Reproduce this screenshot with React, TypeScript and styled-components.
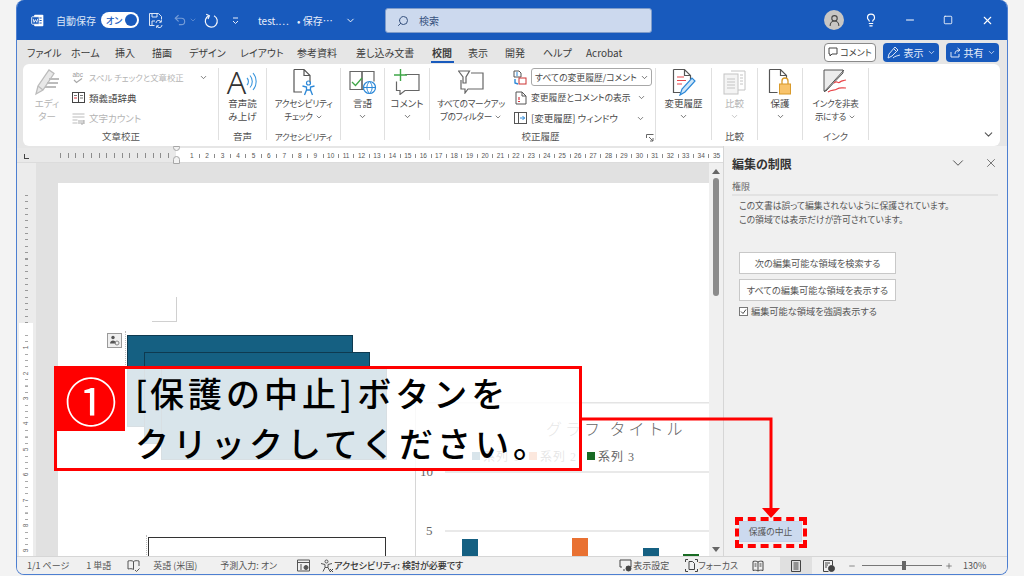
import styled, { createGlobalStyle } from "styled-components";
import { ChevronDown, Minus, Square, X, Search, Lightbulb, UserRound, Undo2, Plus } from "lucide-react";

const GlobalStyle = createGlobalStyle`
  html, body {
    margin: 0;
    padding: 0;
    width: 1024px;
    height: 576px;
    overflow: hidden;
    background: #f3f3f3;
    font-family: "Noto Sans CJK JP", "Noto Sans", sans-serif;
    font-feature-settings: "palt";
    color: #444;
  }
  * { box-sizing: border-box; }
`;

const Stage = styled.div`
  position: relative;
  width: 1024px;
  height: 576px;
  padding-left: 16px;
`;

const Window = styled.div`
  width: 992px;
  height: 575px;
  display: flex;
  flex-direction: column;
  border: 1px solid #4d7fd1;
  border-top: 0;
  border-radius: 8px;
  overflow: hidden;
  background: #e6e6e6;
`;

/* title bar */
const TitleBar = styled.div`
  height: 40px;
  flex: none;
  background: #185abd;
  color: #fff;
  display: flex;
  align-items: center;
  padding-left: 13px;
  font-size: 10px;
`;

const AutoSave = styled.span`
  margin-left: 11px;
  width: 45px;
  color: #dce6f6;
`;

const Toggle = styled.div`
  width: 38px;
  height: 16px;
  border-radius: 8px;
  background: #fff;
  color: #185abd;
  font-size: 9px;
  font-weight: 500;
  display: flex;
  align-items: center;
  justify-content: space-between;
  padding: 0 2px 0 5px;
  &::after {
    content: "";
    width: 12px;
    height: 12px;
    border-radius: 50%;
    background: #185abd;
  }
`;

const TitleIcon = styled.span<{ $left?: number; $dim?: boolean }>`
  display: flex;
  margin-left: ${({ $left }) => $left ?? 0}px;
  opacity: ${({ $dim }) => ($dim ? 0.4 : 1)};
`;

const TitleText = styled.span<{ $left: number; $width: number }>`
  margin-left: ${({ $left }) => $left}px;
  width: ${({ $width }) => $width}px;
  font-size: 10px;
  white-space: nowrap;
  color: #e8eefa;
`;

const SearchBox = styled.div`
  position: absolute;
  left: 385px;
  top: 8px;
  width: 267px;
  height: 25px;
  background: #ccd9ee;
  border: 1px solid #7f9cc9;
  border-radius: 3px;
  color: #37527e;
  font-size: 10px;
  display: flex;
  align-items: center;
  gap: 10px;
  padding-left: 11px;
  svg {
    transform: scaleX(-1);
  }
`;

const TitleRight = styled.div`
  margin-left: auto;
  display: flex;
  align-items: center;
  height: 100%;
`;

const Avatar = styled.div`
  width: 20px;
  height: 20px;
  border-radius: 50%;
  background: #c8c6c4;
  color: #444;
  display: flex;
  align-items: center;
  justify-content: center;
`;

const WinButton = styled.span<{ $left: number }>`
  display: flex;
  margin-left: ${({ $left }) => $left}px;
  color: #fff;
`;

/* tabs */
const TabRow = styled.div`
  height: 24px;
  flex: none;
  display: flex;
  align-items: center;
  padding-left: 10px;
  font-size: 10px;
  color: #3c3c3c;
`;

const Tab = styled.span<{ $active?: boolean; $width: number }>`
  position: relative;
  width: ${({ $width }) => $width}px;
  flex: none;
  white-space: nowrap;
  font-weight: ${({ $active }) => ($active ? 700 : 400)};
  &::after {
    content: "";
    display: ${({ $active }) => ($active ? "block" : "none")};
    position: absolute;
    left: -1px;
    top: 16px;
    width: 23px;
    height: 2px;
    background: #185abd;
  }
`;

const TabActions = styled.div`
  margin-left: auto;
  margin-right: 8px;
  display: flex;
  gap: 7px;
`;

const CommentButton = styled.div`
  width: 52px;
  height: 19px;
  background: #fff;
  border: 1px solid #8a8a8a;
  border-radius: 4px;
  font-size: 9px;
  display: flex;
  align-items: center;
  justify-content: center;
  gap: 2px;
`;

const BlueButton = styled.div<{ $width: number }>`
  width: ${({ $width }) => $width}px;
  height: 19px;
  background: #185abd;
  color: #e8eefa;
  border-radius: 4px;
  font-size: 10px;
  display: flex;
  align-items: center;
  justify-content: center;
  gap: 3px;
`;

/* ribbon */
const Ribbon = styled.div`
  flex: none;
  height: 82px;
  margin: 0 7px 0 6px;
  padding: 4px 0 6px 1px;
  background: #fff;
  border-radius: 6px;
  display: flex;
  position: relative;
`;

const Group = styled.div<{ $width: number }>`
  width: ${({ $width }) => $width}px;
  flex: none;
  height: 72px;
  display: flex;
  flex-direction: column;
  border-right: 1px solid #e0e0e0;
  position: relative;
`;

const GroupBody = styled.div`
  flex: 1;
  display: flex;
  min-height: 0;
`;

const GroupLabel = styled.div<{ $offset?: number; $tight?: boolean }>`
  height: 14px;
  margin-bottom: -3px;
  text-align: center;
  font-size: ${({ $tight }) => ($tight ? 8.5 : 9.5)}px;
  letter-spacing: ${({ $tight }) => ($tight ? -0.3 : 0)}px;
  line-height: 14px;
  color: #555;
  padding-right: ${({ $offset }) => $offset ?? 0}px;
`;

const LargeButton = styled.div<{ $width?: number; $dim?: boolean; $tight?: boolean }>`
  width: ${({ $width }) => ($width ? `${$width}px` : "100%")};
  flex: none;
  display: flex;
  flex-direction: column;
  align-items: center;
  text-align: center;
  font-size: ${({ $tight }) => ($tight ? 8.6 : 9.5)}px;
  letter-spacing: ${({ $tight }) => ($tight ? -0.3 : 0)}px;
  line-height: 13px;
  color: ${({ $dim }) => ($dim ? "#b4b4b4" : "#4a4a4a")};
  white-space: nowrap;
  > svg {
    margin-top: 2px;
  }
`;

const InlineChevron = styled(ChevronDown)`
  margin-left: 2px;
  vertical-align: -1px;
`;

const IconSlot = styled.div`
  height: 28px;
  margin-bottom: 1px;
  display: flex;
  align-items: center;
  justify-content: center;
  position: relative;
`;

const BigLetter = styled.span`
  font-family: "Noto Sans", sans-serif;
  font-size: 32px;
  line-height: 28px;
  font-weight: 300;
  color: #333;
`;

const ListColumn = styled.div<{ $left: number }>`
  margin-left: ${({ $left }) => $left}px;
  flex: 1;
  display: flex;
  flex-direction: column;
  gap: 2px;
`;

const ListRow = styled.div<{ $dim?: boolean; $size?: number }>`
  height: 18.5px;
  display: flex;
  align-items: center;
  gap: 4px;
  font-size: ${({ $size }) => $size ?? 9.5}px;
  white-space: nowrap;
  color: ${({ $dim }) => ($dim ? "#b4b4b4" : "#4a4a4a")};
`;

const Tiny = styled.span<{ $left: number }>`
  display: flex;
  margin-left: ${({ $left }) => $left}px;
  color: #555;
`;

const SelectBox = styled.div`
  width: 121px;
  height: 18px;
  border: 1px solid #a8a8a8;
  border-radius: 3px;
  display: flex;
  align-items: center;
  justify-content: space-between;
  padding: 0 2px 0 3px;
  font-size: 8.8px;
`;

const RibbonCollapse = styled.span`
  position: absolute;
  right: 5px;
  bottom: 5px;
  display: flex;
  color: #555;
`;

const Launcher = styled.span`
  position: absolute;
  right: 1px;
  bottom: -2px;
  display: flex;
`;

/* workspace */
const Workspace = styled.div`
  flex: 1;
  min-height: 0;
  display: flex;
`;

const DocColumn = styled.div`
  width: 706px;
  flex: none;
  display: flex;
  flex-direction: column;
  background: #e6e6e6;
  padding-top: 2px;
`;

const HRuler = styled.div`
  height: 15px;
  flex: none;
  display: flex;
  padding-left: 159px;
  border-bottom: 1px solid #dcdcdc;
  background: #e9e9e9 repeating-linear-gradient(90deg, #8c8c8c 0 1px, transparent 1px 7.72px) 43px 5px / 116px 5px no-repeat;
  position: relative;
`;

const RulerTicks = styled.div`
  flex: 1;
  background: #fff;
  display: flex;
  align-items: center;
  padding-left: 8px;
  overflow: hidden;
  font-family: "Liberation Sans", sans-serif;
  font-size: 6.5px;
  color: #555;
`;

const RulerCell = styled.span`
  width: 15.45px;
  flex: none;
  text-align: center;
  position: relative;
  &::after {
    content: "";
    position: absolute;
    left: 15px;
    top: 2px;
    width: 1px;
    height: 4px;
    background: #8c8c8c;
  }
`;

const TabStop = styled.span`
  position: absolute;
  left: 7px;
  top: 6px;
  width: 5px;
  height: 5px;
  border-left: 1.5px solid #444;
  border-bottom: 1.5px solid #444;
`;

const IndentMark = styled.span`
  position: absolute;
  left: 156px;
  width: 7px;
  background: #f2f2f2;
  border: 1px solid #a6a6a6;
`;

const IndentTop = styled(IndentMark)`
  top: -2px;
  height: 5px;
  border-radius: 0 0 4px 4px;
`;

const IndentBottom = styled(IndentMark)`
  top: 8px;
  height: 8px;
  border-radius: 4px 4px 0 0;
`;

const DocRow = styled.div`
  flex: 1;
  min-height: 0;
  display: flex;
`;

const VRuler = styled.div`
  width: 19px;
  flex: none;
  padding: 32px 3px 0 2px;
  background: #ececec;
  display: flex;
  flex-direction: column;
`;

const VRulerGrey = styled.div`
  height: 128px;
  flex: none;
  background: repeating-linear-gradient(180deg, #999 0 1px, transparent 1px 6.35px) center / 3px 100% no-repeat;
`;

const VRulerWhite = styled.div`
  flex: 1;
  background: #fff;
  padding-top: 12px;
  font-family: "Liberation Sans", sans-serif;
  font-size: 6.5px;
  color: #666;
`;

const VRulerCell = styled.div`
  height: 25.4px;
  display: flex;
  align-items: center;
  justify-content: center;
  background: repeating-linear-gradient(180deg, #aaa 0 1px, transparent 1px 6.35px) center / 3px 100% no-repeat;
  span {
    transform: rotate(-90deg);
    background: #fff;
    line-height: 7px;
  }
`;

const DocScroller = styled.div`
  flex: 1;
  min-width: 0;
  background: #e1e1e1;
  padding: 20px 0 0 22px;
  display: flex;
  overflow: hidden;
`;

const Page = styled.div`
  flex: 1;
  height: 400px;
  background: #fff;
  position: relative;
`;

const MarginCorner = styled.div`
  position: absolute;
  left: 94px;
  top: 114px;
  width: 25px;
  height: 25px;
  border-right: 1px solid #d0d0d0;
  border-bottom: 1px solid #d0d0d0;
`;

const AnchorBadge = styled.div`
  position: absolute;
  left: 49px;
  top: 150px;
  width: 15px;
  height: 15px;
  background: #efefef;
  border: 1px solid #9a9a9a;
  display: flex;
  align-items: center;
  justify-content: center;
`;

const DottedGuide = styled.div<{ $x: number; $y: number; $h: number }>`
  position: absolute;
  left: ${({ $x }) => $x}px;
  top: ${({ $y }) => $y}px;
  height: ${({ $h }) => $h}px;
  border-left: 1px dotted #bdbdbd;
`;

const BlueShape = styled.div<{ $x: number; $y: number }>`
  position: absolute;
  left: ${({ $x }) => $x}px;
  top: ${({ $y }) => $y}px;
  width: 226px;
  height: 92px;
  background: #156082;
  border: 1px solid #0e3a50;
`;

const OutlineShape = styled.div`
  position: absolute;
  left: 90px;
  top: 354px;
  width: 238px;
  height: 40px;
  background: #fff;
  border: 1px solid #333;
`;

const ChartArea = styled.svg`
  position: absolute;
  left: 356px;
  top: 219px;
`;

const ChartTitle = styled.text`
  font-family: "Noto Sans CJK JP", sans-serif;
  font-size: 16px;
  font-weight: 300;
  letter-spacing: 3px;
  font-feature-settings: normal;
  fill: #666;
`;

const ScrollTrack = styled.div`
  width: 14px;
  flex: none;
  background: #f0f0f0;
  display: flex;
  flex-direction: column;
  align-items: center;
  padding-top: 6px;
`;

const ScrollArrow = styled.span<{ $down?: boolean }>`
  width: 0;
  height: 0;
  border-left: 4px solid transparent;
  border-right: 4px solid transparent;
  ${({ $down }) => ($down ? "border-top: 5px solid #666; margin-top: auto; margin-bottom: 4px;" : "border-bottom: 5px solid #666;")}
`;

const ScrollThumb = styled.div`
  width: 6px;
  height: 118px;
  margin-top: 4px;
  border-radius: 3px;
  background: #8b8b8b;
`;

/* task pane */
const Pane = styled.div`
  flex: 1;
  min-width: 0;
  background: #f0f0f0;
  border-left: 1px solid #d6d6d6;
  display: flex;
  flex-direction: column;
  padding: 8px 9px 14px 8px;
  font-size: 8.8px;
  color: #555;
`;

const PaneHeader = styled.div`
  display: flex;
  align-items: center;
  height: 18px;
  color: #444;
  svg + svg {
    margin-left: 17px;
  }
`;

const PaneTitle = styled.h2`
  margin: 0 auto 0 0;
  font-size: 12px;
  font-weight: 700;
  color: #333;
`;

const PaneSection = styled.div`
  margin-top: 8px;
  padding-bottom: 1px;
  border-bottom: 2px solid #e2e2e2;
  font-size: 9px;
  line-height: 13px;
  color: #666;
`;

const PaneBody = styled.div`
  flex: 1;
  display: flex;
  flex-direction: column;
  padding-left: 7px;
`;

const PaneText = styled.p`
  margin: 3px 0 0;
  line-height: 14px;
`;

const PaneButton = styled.div<{ $top: number }>`
  width: 157px;
  height: 22px;
  margin-top: ${({ $top }) => $top}px;
  background: #fff;
  border: 1px solid #c8c8c8;
  display: flex;
  align-items: center;
  justify-content: center;
  font-size: 9.2px;
`;

const CheckRow = styled.label`
  display: flex;
  align-items: center;
  gap: 3px;
  margin-top: 3px;
  font-size: 9.2px;
`;

const CheckBox = styled.span`
  width: 9px;
  height: 9px;
  background: #fff;
  border: 1px solid #777;
  display: flex;
  align-items: center;
  justify-content: center;
`;

const StopButton = styled.div`
  width: 63px;
  height: 21px;
  margin-top: auto;
  background: #ccdaef;
  border: 1px solid #c5d3e8;
  display: flex;
  align-items: center;
  justify-content: center;
  font-size: 8.8px;
  color: #555;
`;

/* status bar */
const StatusBar = styled.div`
  height: 18px;
  flex: none;
  background: #f0f0f0;
  border-top: 1px solid #d6d6d6;
  display: flex;
  align-items: center;
  font-size: 9px;
  color: #555;
  position: relative;
`;

const StatusItem = styled.span<{ $left: number; $strong?: boolean }>`
  display: flex;
  align-items: center;
  margin-left: ${({ $left }) => $left}px;
  white-space: nowrap;
  font-weight: ${({ $strong }) => ($strong ? 500 : 400)};
  color: ${({ $strong }) => ($strong ? "#333" : "#555")};
`;

const ViewButton = styled.span<{ $active?: boolean; $left: number }>`
  width: 32px;
  height: 17px;
  margin-left: ${({ $left }) => $left}px;
  display: flex;
  align-items: center;
  justify-content: center;
  background: ${({ $active }) => ($active ? "#e0e0e0" : "transparent")};
`;

const ZoomTrack = styled.span`
  width: 80px;
  height: 1px;
  margin-left: 6px;
  background: #777;
  position: relative;
  &::after {
    content: "";
    position: absolute;
    left: 40px;
    top: -4px;
    width: 4px;
    height: 9px;
    background: #666;
  }
`;

/* instruction overlay */
const Callout = styled.div`
  position: absolute;
  left: 54px;
  top: 366px;
  width: 528px;
  height: 105px;
  border: 3px solid #f00;
  background: rgba(255, 255, 255, 0.84);
  display: flex;
  align-items: flex-start;
`;

const StepBadge = styled.div`
  width: 68px;
  height: 63px;
  flex: none;
  background: #f00;
  color: #fff;
  font-size: 52px;
  line-height: 63px;
  text-align: center;
  font-weight: 400;
  margin-top: -1px;
`;

const CalloutText = styled.div`
  margin: -1px 0 0 10px;
  font-size: 34px;
  line-height: 50px;
  font-weight: 500;
  letter-spacing: 4px;
  font-feature-settings: normal;
  color: #000;
  white-space: nowrap;
`;

const Bracket = styled.span<{ $after: number }>`
  letter-spacing: 0;
  font-feature-settings: "palt";
  margin-right: ${({ $after }) => $after}px;
`;

const Connector = styled.svg`
  position: absolute;
  left: 581px;
  top: 416px;
`;

const DashedFrame = styled.div`
  position: absolute;
  left: 735px;
  top: 517px;
  width: 72px;
  height: 31px;
  border: 4px dashed #f00;
`;

const tabs: [string, number][] = [
  ["ファイル", 44], ["ホーム", 44], ["挿入", 37], ["描画", 37], ["デザイン", 51],
  ["レイアウト", 57], ["参考資料", 59], ["差し込み文書", 76], ["校閲", 36], ["表示", 37],
  ["開発", 38], ["ヘルプ", 43], ["Acrobat", 50],
];

const rulerNumbers = Array.from({ length: 35 }, (_, i) => i + 1);
const vRulerNumbers = [1, 2, 3, 4, 5, 6, 7, 8, 9];

const WordLogo = () => (
  <svg width="15" height="15" viewBox="0 0 18 18">
    <rect x="5" y="2" width="11" height="14" rx="1" fill="#fff" />
    <path d="M8 6h6M8 9h6M8 12h6" stroke="#185abd" strokeWidth="1.2" />
    <rect x="2" y="4.5" width="9" height="9" rx="1" fill="#185abd" stroke="#fff" />
    <path d="M3.800 7l1 4.200L6.500 8l1.700 3.200L9.200 7" fill="none" stroke="#fff" strokeWidth="1" />
  </svg>
);

const SaveIcon = () => (
  <svg width="15" height="16" viewBox="0 0 15 16" fill="none" stroke="#dce6f6" strokeWidth="1">
    <path d="M1.500 1.500h9l3 3v3M1.500 1.500v12h5" />
    <path d="M4 1.500v3.500h5V1.500M4 13V9h3" />
    <path d="M8 11a2.600 2.600 0 0 1 5-1M14 13a2.600 2.600 0 0 1-5 1" />
    <path d="M13.300 8v2.200h-2.200M8.700 16v-2.200h2.200" />
  </svg>
);

const RedoIcon = () => (
  <svg width="15" height="15" viewBox="0 0 15 15" fill="none" stroke="#f2f5fb" strokeWidth="1.200">
    <path d="M5 2.600a6 6 0 1 0 5 .2" />
    <path d="M2.200 1.200L5.400 2.800 4 6" />
  </svg>
);

const QatMore = () => (
  <svg width="9" height="9" viewBox="0 0 9 9" fill="none" stroke="#e8eefa">
    <path d="M2 2h5M2 5l2.500 2.500L7 5" />
  </svg>
);

const EditorIcon = () => (
  <svg width="27" height="28" viewBox="0 0 27 28" fill="none" stroke="#bcbcbc" strokeWidth="1.3">
    <path d="M2 26l2-8L15 2l5 3.500L9 22z" fill="#e8e8e8" />
    <path d="M4 18l5 4" />
    <path d="M15 11h10M13 15h11M11 19h11" strokeWidth="2" />
  </svg>
);

const SpellIcon = () => (
  <svg width="13" height="13" viewBox="0 0 13 13" fill="none" stroke="#a9a9a9">
    <text x="0.500" y="6" fontSize="6.500" fill="#9a9a9a" stroke="none" fontFamily="Liberation Sans">abc</text>
    <path d="M2 9l2.500 2.500L10 7.500" strokeWidth="1.200" />
  </svg>
);

const BookIcon = () => (
  <svg width="13" height="13" viewBox="0 0 13 13" fill="none" stroke="#444">
    <rect x="0.500" y="1.500" width="12" height="10" fill="#fff" />
    <path d="M6.500 1.500v10" />
    <path d="M2 4.500h3M8 4.500h3M8 7h3" stroke="#777" />
    <path d="M2 7h3" stroke="#d9363e" />
  </svg>
);

const CountIcon = () => (
  <svg width="13" height="13" viewBox="0 0 13 13" fill="none" stroke="#bbb">
    <path d="M0.500 2h12M0.500 5h12M0.500 8h5M0.500 11h5" />
    <path d="M7 8v4M9 8v4h2V8M12 8v4" stroke="#aaa" />
  </svg>
);

const ReadWaves = () => (
  <svg width="12" height="20" viewBox="0 0 12 20" fill="none" stroke="#3a96dd" strokeWidth="1.100">
    <path d="M1 6a5 5 0 0 1 0 7M4 3.500a9 9 0 0 1 0 12M7 1a13 13 0 0 1 0 17" />
  </svg>
);

const AccessibilityIcon = () => (
  <svg width="26" height="28" viewBox="0 0 26 28" fill="none" stroke="#555">
    <path d="M3 1.500h10l6 6v7M3 1.500v22.500h8M13 1.500v6h6" strokeWidth="1.200" />
    <circle cx="17.500" cy="15" r="2" stroke="#2b88d8" strokeWidth="1.200" />
    <path d="M11.500 18l4 1v3l-2 5M23.500 18l-4 1v3l2 5M15.500 22h4" stroke="#2b88d8" strokeWidth="1.300" />
  </svg>
);

const LanguageIcon = () => (
  <svg width="28" height="26" viewBox="0 0 28 26" fill="none" stroke="#666">
    <path d="M1 2.500h12v18H1zM13 2.500h12v10M13 20.500h4" strokeWidth="1.200" />
    <path d="M13 2.500v18" strokeWidth="1.200" />
    <path d="M3 13l3.500 3.500L13 9" stroke="#3fa648" strokeWidth="1.300" />
    <circle cx="20.500" cy="18.500" r="6" fill="#fff" stroke="#2b88d8" strokeWidth="1.200" />
    <path d="M14.500 18.500h12M20.500 12.500c-3.500 3.500-3.500 8.500 0 12M20.500 12.500c3.500 3.500 3.500 8.500 0 12" stroke="#2b88d8" />
  </svg>
);

const CommentIcon = () => (
  <svg width="26" height="26" viewBox="0 0 26 26" fill="none" stroke="#666" strokeWidth="1.200">
    <path d="M11 5.500h14v16H11l-5 4v-4H2.500v-9" />
    <path d="M6.500 0v12M0 6h13" stroke="#3fa648" strokeWidth="1.400" />
  </svg>
);

const FilterCommentIcon = () => (
  <svg width="26" height="24" viewBox="0 0 26 24" fill="none" stroke="#666" strokeWidth="1.200">
    <path d="M13 3h12v16H10l-3 4v-4H3v-9" />
    <path d="M0.500 1h11L8 7v6H5V7z" fill="#fff" />
  </svg>
);

const ChangesGlyph = () => (
  <svg width="14" height="15" viewBox="0 0 14 15" fill="none">
    <path d="M1 1h5l2 2v4H1z" stroke="#555" />
    <rect x="6" y="8" width="7" height="6" fill="#fff" stroke="#c33" />
    <path d="M2 9v4l3 1" stroke="#2b88d8" strokeWidth="1.400" />
    <path d="M3 3h2M3 5h2" stroke="#2b88d8" />
  </svg>
);

const MarkupDocGlyph = () => (
  <svg width="12" height="14" viewBox="0 0 12 14" fill="none" stroke="#555">
    <path d="M1 1h6l4 4v8H1zM7 1v4h4" />
    <path d="M4 6v3" stroke="#d9363e" strokeWidth="1.200" />
    <path d="M3 10.500h2" stroke="#d9363e" />
  </svg>
);

const PaneGlyph = () => (
  <svg width="13" height="12" viewBox="0 0 13 12" fill="none" stroke="#555">
    <rect x="0.500" y="0.500" width="12" height="11" />
    <path d="M4.500 0.500v11" />
    <path d="M6 6h5M8.500 4l2 2-2 2" stroke="#2b88d8" />
  </svg>
);

const TrackIcon = () => (
  <svg width="24" height="28" viewBox="0 0 24 28" fill="none">
    <path d="M1.500 1.500h11l6 6v4M1.500 1.500v23h7M12.500 1.500v6h6" stroke="#555" strokeWidth="1.200" />
    <path d="M5 9h7M5 12.500h9M5 16h5" stroke="#e8464a" strokeWidth="1.200" />
    <path d="M8 27l2-6L20 10l3 3-10 11z" fill="#cfe6f8" stroke="#2b88d8" strokeWidth="1.200" />
  </svg>
);

const CompareIcon = () => (
  <svg width="24" height="25" viewBox="0 0 24 25" fill="none" stroke="#c4c4c4">
    <path d="M8 1h14v19H14" />
    <rect x="1" y="4" width="14" height="20" fill="#f4f4f4" />
    <path d="M4 9h8M4 12h8M4 15h8M4 18h8M17 5h3M17 8h3M17 11h3M17 14h3" />
  </svg>
);

const ProtectIcon = () => (
  <svg width="24" height="28" viewBox="0 0 24 28" fill="none">
    <path d="M1.500 1.500h11l6 6v3M1.500 1.500v23h8M12.500 1.500v6h6" stroke="#555" strokeWidth="1.200" />
    <rect x="11.500" y="16" width="11" height="10" fill="#f8c36b" stroke="#d99a2b" />
    <path d="M14 16v-3a3 3 0 0 1 6 0v3" stroke="#d99a2b" strokeWidth="1.300" />
  </svg>
);

const InkIcon = () => (
  <svg width="26" height="26" viewBox="0 0 26 26" fill="none">
    <path d="M1 1h19v3L3 22H1z" fill="#ececec" stroke="#555" />
    <path d="M1 23L21 1" stroke="#555" />
    <path d="M11 14c3-3 4 1 6-1s3-1 6-2M5 23c4-3 6-1 9-3s5-1 9-1" stroke="#e8464a" strokeWidth="1.200" />
  </svg>
);

const LauncherIcon = () => (
  <svg width="8" height="8" viewBox="0 0 8 8" fill="none" stroke="#666">
    <path d="M0.500 4V0.500H7.500M3 3l4 4M7 4v3H4" />
  </svg>
);

const PenIcon = () => (
  <svg width="14" height="14" viewBox="0 0 14 14" fill="none" stroke="#dce6f6">
    <path d="M1 13l1-4 6-7 3 3-6 6z" />
    <path d="M6 13c2-2 4-2 7-3M7 4l3 3" />
  </svg>
);

const ShareIcon = () => (
  <svg width="11" height="11" viewBox="0 0 11 11" fill="none" stroke="#dce6f6">
    <path d="M1 5v5h8V7M5 7c0-3 2-4 5-4M7.500 1L10 3 7.500 5" />
  </svg>
);

const CommentMini = () => (
  <svg width="10" height="10" viewBox="0 0 10 10" fill="none" stroke="#444">
    <path d="M1 1h8v6H4L2 9V7H1z" />
  </svg>
);

const AnchorGlyph = () => (
  <svg width="11" height="11" viewBox="0 0 11 11">
    <circle cx="4" cy="2.500" r="1.700" fill="#555" />
    <path d="M1 8.500c0-4 6-4 6 0z" fill="#555" />
    <circle cx="8" cy="8" r="2" fill="none" stroke="#888" />
  </svg>
);

const BookStatus = () => (
  <svg width="13" height="13" viewBox="0 0 13 13" fill="none" stroke="#555">
    <path d="M6.500 2.500C5 1.500 3 1.500 1 2v8c2-.5 4-.5 5.500.5V2.500zM6.500 2.500C8 1.500 10 1.500 12 2v5M8 11l1.500 1.500 3-3" />
  </svg>
);

const MacroStatus = () => (
  <svg width="13" height="13" viewBox="0 0 13 13" fill="none" stroke="#555">
    <path d="M0.500 1h12v11H0.500zM0.500 3.500h12M3 6h2M3 8h2M3 10h2" />
    <circle cx="9" cy="8.500" r="2" fill="#555" />
  </svg>
);

const PersonStatus = () => (
  <svg width="14" height="14" viewBox="0 0 14 14" fill="none" stroke="#555">
    <circle cx="6.500" cy="2.500" r="1.500" />
    <path d="M1 4.500l4 1v3l-2 4M12 4.500l-4 1v3l2 4M5 8.500h3" />
    <path d="M10 10l3 3M13 10l-3 3" stroke="#444" />
  </svg>
);

const DisplayStatus = () => (
  <svg width="14" height="13" viewBox="0 0 14 13" fill="none" stroke="#444">
    <path d="M1 1h11v7H7M1 1v7h2M4 11h2" />
    <circle cx="9.500" cy="9.500" r="2.500" fill="#444" />
  </svg>
);

const FocusStatus = () => (
  <svg width="13" height="13" viewBox="0 0 13 13" fill="none" stroke="#444">
    <path d="M0.500 3V0.500H3M10 0.500h2.500V3M0.500 10v2.500H3M10 12.500h2.500V10" />
    <path d="M4 2.500h3.500l2 2v6H4z" />
  </svg>
);

const ReadView = () => (
  <svg width="12" height="12" viewBox="0 0 12 12" fill="none" stroke="#444">
    <path d="M6 2C4.500 1 2.500 1 1 1.500v9c1.500-.5 3.500-.5 5 .5 1.500-1 3.500-1 5-.5v-9C9.500 1 7.500 1 6 2zM6 2v9M2.500 4h2M2.500 6h2M7.500 4h2M7.500 6h2" />
  </svg>
);

const PrintView = () => (
  <svg width="10" height="12" viewBox="0 0 10 12" fill="none" stroke="#444">
    <path d="M0.500 0.500h9v11h-9zM2.500 3h5M2.500 5h5M2.500 7h5M2.500 9h5" />
  </svg>
);

const WebView = () => (
  <svg width="12" height="12" viewBox="0 0 12 12" fill="none" stroke="#444">
    <path d="M0.500 0.500h9v5M0.500 0.500v11h5M2 3h5M2 5h3M2 7h2" />
    <circle cx="8.500" cy="8.500" r="3" fill="#444" />
  </svg>
);

const Chart = () => (
  <ChartArea width="295" height="154" viewBox="0 0 295 154">
    <path d="M1.500 0v154" stroke="#d6d6d6" strokeWidth="1" />
    <path d="M2 0.500h293" stroke="#e4e4e4" strokeWidth="2" />
    <path d="M31 70h264M31 129h264" stroke="#e2e2e2" strokeWidth="1.500" />
    <ChartTitle x="132" y="33">グラフ タイトル</ChartTitle>
    <rect x="58" y="50" width="8" height="8" fill="#156082" />
    <text x="69" y="59" fontSize="12" letterSpacing="1" fill="#666" fontFamily="Liberation Serif, Noto Sans CJK JP">系列 1</text>
    <rect x="115" y="50" width="8" height="8" fill="#e97132" />
    <text x="126" y="59" fontSize="12" letterSpacing="1" fill="#666" fontFamily="Liberation Serif, Noto Sans CJK JP">系列 2</text>
    <rect x="173" y="50" width="8" height="8" fill="#196b24" />
    <text x="184" y="59" fontSize="12" letterSpacing="1" fill="#666" fontFamily="Liberation Serif, Noto Sans CJK JP">系列 3</text>
    <text x="6" y="74" fontSize="13" fill="#666" fontFamily="Liberation Serif">10</text>
    <text x="12" y="133" fontSize="13" fill="#666" fontFamily="Liberation Serif">5</text>
    <rect x="48" y="137" width="16" height="17" fill="#156082" />
    <rect x="158" y="136" width="16" height="18" fill="#e97132" />
    <rect x="229" y="146" width="16" height="8" fill="#156082" />
    <rect x="269" y="152" width="16" height="2" fill="#196b24" />
  </ChartArea>
);

const small = { size: 9, strokeWidth: 2 };

export default function App() {
  return (
    <Stage>
      <GlobalStyle />
      <Window>
        <TitleBar>
          <TitleIcon><WordLogo /></TitleIcon>
          <AutoSave>自動保存</AutoSave>
          <Toggle>オン</Toggle>
          <TitleIcon $left={9}><SaveIcon /></TitleIcon>
          <TitleIcon $left={10} $dim><Undo2 size={14} /></TitleIcon>
          <TitleIcon $left={2} $dim><ChevronDown size={8} /></TitleIcon>
          <TitleIcon $left={7}><RedoIcon /></TitleIcon>
          <TitleIcon $left={12}><QatMore /></TitleIcon>
          <TitleText $left={18} $width={39}>test.…</TitleText>
          <TitleText $left={0} $width={48}>• 保存…</TitleText>
          <TitleIcon $left={0}><ChevronDown size={11} /></TitleIcon>
          <SearchBox><Search size={12} />検索</SearchBox>
          <TitleRight>
            <Avatar><UserRound size={13} /></Avatar>
            <WinButton $left={20}><Lightbulb size={14} /></WinButton>
            <WinButton $left={26}><Minus size={12} /></WinButton>
            <WinButton $left={27}><Square size={10} /></WinButton>
            <WinButton $left={28}><X size={13} /></WinButton>
            <WinButton $left={13} />
          </TitleRight>
        </TitleBar>

        <TabRow>
          {tabs.map(([name, width]) => (
            <Tab key={name} $width={width} $active={name === "校閲"}>{name}</Tab>
          ))}
          <TabActions>
            <CommentButton><CommentMini />コメント</CommentButton>
            <BlueButton $width={56}><PenIcon />表示<ChevronDown {...small} /></BlueButton>
            <BlueButton $width={53}><ShareIcon />共有<ChevronDown {...small} /></BlueButton>
          </TabActions>
        </TabRow>

        <Ribbon>
          <Group $width={195}>
            <GroupBody>
              <LargeButton $width={46} $dim>
                <IconSlot><EditorIcon /></IconSlot>
                エディ<br />ター
              </LargeButton>
              <ListColumn $left={2}>
                <ListRow $dim $size={8.4}><SpellIcon />スペル チェックと文章校正<Tiny $left={11}><ChevronDown {...small} /></Tiny></ListRow>
                <ListRow><BookIcon />類義語辞典</ListRow>
                <ListRow $dim><CountIcon />文字カウント</ListRow>
              </ListColumn>
            </GroupBody>
            <GroupLabel>文章校正</GroupLabel>
          </Group>
          <Group $width={48}>
            <GroupBody>
              <LargeButton>
                <IconSlot><BigLetter>A</BigLetter><ReadWaves /></IconSlot>
                音声読<br />み上げ
              </LargeButton>
            </GroupBody>
            <GroupLabel>音声</GroupLabel>
          </Group>
          <Group $width={74}>
            <GroupBody>
              <LargeButton $tight>
                <IconSlot><AccessibilityIcon /></IconSlot>
                アクセシビリティ<br />
                <span>チェック<InlineChevron size={8} /></span>
              </LargeButton>
            </GroupBody>
            <GroupLabel $tight>アクセシビリティ</GroupLabel>
          </Group>
          <Group $width={44}>
            <GroupBody>
              <LargeButton>
                <IconSlot><LanguageIcon /></IconSlot>
                言語
                <ChevronDown {...small} />
              </LargeButton>
            </GroupBody>
          </Group>
          <Group $width={45}>
            <GroupBody>
              <LargeButton>
                <IconSlot><CommentIcon /></IconSlot>
                コメント
                <ChevronDown {...small} />
              </LargeButton>
            </GroupBody>
          </Group>
          <Group $width={226}>
            <GroupBody>
              <LargeButton $width={82} $tight>
                <IconSlot><FilterCommentIcon /></IconSlot>
                すべてのマークアッ<br />
                <span>プのフィルター<InlineChevron size={8} /></span>
              </LargeButton>
              <ListColumn $left={1}>
                <ListRow><ChangesGlyph /><SelectBox>すべての変更履歴/コメント<ChevronDown {...small} /></SelectBox></ListRow>
                <ListRow $size={8.8}><Tiny $left={2}><MarkupDocGlyph /></Tiny>変更履歴とコメントの表示<Tiny $left={2}><ChevronDown {...small} /></Tiny></ListRow>
                <ListRow><Tiny $left={1}><PaneGlyph /></Tiny>[変更履歴] ウィンドウ<Tiny $left={14}><ChevronDown {...small} /></Tiny></ListRow>
              </ListColumn>
            </GroupBody>
            <GroupLabel $offset={4}>校正履歴</GroupLabel>
            <Launcher><LauncherIcon /></Launcher>
          </Group>
          <Group $width={56}>
            <GroupBody>
              <LargeButton>
                <IconSlot><TrackIcon /></IconSlot>
                変更履歴
                <ChevronDown {...small} />
              </LargeButton>
            </GroupBody>
          </Group>
          <Group $width={46}>
            <GroupBody>
              <LargeButton $dim>
                <IconSlot><CompareIcon /></IconSlot>
                比較
                <ChevronDown {...small} />
              </LargeButton>
            </GroupBody>
            <GroupLabel>比較</GroupLabel>
          </Group>
          <Group $width={45}>
            <GroupBody>
              <LargeButton>
                <IconSlot><ProtectIcon /></IconSlot>
                保護
                <ChevronDown {...small} />
              </LargeButton>
            </GroupBody>
          </Group>
          <Group $width={66}>
            <GroupBody>
              <LargeButton $tight>
                <IconSlot><InkIcon /></IconSlot>
                インクを非表<br />
                <span>示にする<InlineChevron size={8} /></span>
              </LargeButton>
            </GroupBody>
            <GroupLabel>インク</GroupLabel>
          </Group>
          <RibbonCollapse><ChevronDown size={13} /></RibbonCollapse>
        </Ribbon>

        <Workspace>
          <DocColumn>
            <HRuler>
              <TabStop />
              <IndentTop />
              <IndentBottom />
              <RulerTicks>
                {rulerNumbers.map((n) => (
                  <RulerCell key={n}>{n}</RulerCell>
                ))}
              </RulerTicks>
            </HRuler>
            <DocRow>
              <VRuler>
                <VRulerGrey />
                <VRulerWhite>
                  {vRulerNumbers.map((n) => (
                    <VRulerCell key={n}><span>{n}</span></VRulerCell>
                  ))}
                </VRulerWhite>
              </VRuler>
              <DocScroller>
                <Page>
                  <MarginCorner />
                  <AnchorBadge><AnchorGlyph /></AnchorBadge>
                  <DottedGuide $x={67} $y={148} $h={36} />
                  <DottedGuide $x={88} $y={352} $h={30} />
                  <BlueShape $x={69} $y={152} />
                  <BlueShape $x={86} $y={169} />
                  <BlueShape $x={103} $y={185} />
                  <OutlineShape />
                  <Chart />
                </Page>
              </DocScroller>
              <ScrollTrack>
                <ScrollArrow />
                <ScrollThumb />
                <ScrollArrow $down />
              </ScrollTrack>
            </DocRow>
          </DocColumn>

          <Pane>
            <PaneHeader>
              <PaneTitle>編集の制限</PaneTitle>
              <ChevronDown size={18} strokeWidth={1.200} />
              <X size={14} strokeWidth={1.200} />
            </PaneHeader>
            <PaneSection>権限</PaneSection>
            <PaneBody>
              <PaneText>
                この文書は誤って編集されないように保護されています。<br />
                この領域では表示だけが許可されています。
              </PaneText>
              <PaneButton $top={25}>次の編集可能な領域を検索する</PaneButton>
              <PaneButton $top={5}>すべての編集可能な領域を表示する</PaneButton>
              <CheckRow>
                <CheckBox>
                  <svg width="7" height="7" viewBox="0 0 7 7" fill="none" stroke="#444"><path d="M1 3.500l2 2 3-4" /></svg>
                </CheckBox>
                編集可能な領域を強調表示する
              </CheckRow>
              <StopButton>保護の中止</StopButton>
            </PaneBody>
          </Pane>
        </Workspace>

        <StatusBar>
          <StatusItem $left={10}>1/1 ページ</StatusItem>
          <StatusItem $left={17}>1 単語</StatusItem>
          <StatusItem $left={16}><BookStatus /></StatusItem>
          <StatusItem $left={13}>英語 (米国)</StatusItem>
          <StatusItem $left={23}>予測入力: オン</StatusItem>
          <StatusItem $left={20}><MacroStatus /></StatusItem>
          <StatusItem $left={10}><PersonStatus /></StatusItem>
          <StatusItem $left={0} $strong>アクセシビリティ: 検討が必要です</StatusItem>
          <StatusItem $left={156}><DisplayStatus />表示設定</StatusItem>
          <StatusItem $left={16}><FocusStatus />フォーカス</StatusItem>
          <ViewButton $left={4}><ReadView /></ViewButton>
          <ViewButton $left={6} $active><PrintView /></ViewButton>
          <ViewButton $left={1}><WebView /></ViewButton>
          <StatusItem $left={3}><Minus size={8} /></StatusItem>
          <ZoomTrack />
          <StatusItem $left={3}><Plus size={8} /></StatusItem>
          <StatusItem $left={10}>130%</StatusItem>
        </StatusBar>
      </Window>

      <Callout>
        <StepBadge>①</StepBadge>
        <CalloutText>
          <Bracket $after={3}>[</Bracket>保護の中止<Bracket $after={5}>]</Bracket>ボタンを<br />
          クリックしてください。
        </CalloutText>
      </Callout>
      <Connector width="200" height="104" viewBox="0 0 200 104" fill="none">
        <path d="M0 3H190V92" stroke="#f00" strokeWidth="3" />
        <path d="M181 92h18l-9 10z" fill="#f00" />
      </Connector>
      <DashedFrame />
    </Stage>
  );
}
